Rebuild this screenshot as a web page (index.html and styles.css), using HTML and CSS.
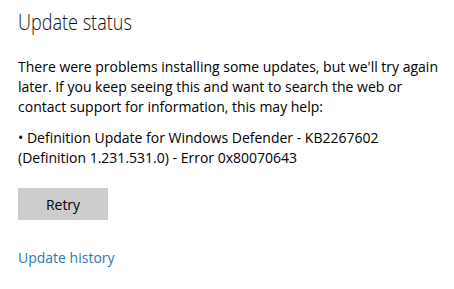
FILE: index.html
```html
<!DOCTYPE html>
<html>
<head>
<meta charset="utf-8">
<link rel="stylesheet" href="styles.css">
</head>
<body>
<div class="page">
  <h1 class="title">Update status</h1>
  <p class="msg">There were problems installing some updates, but we'll try again later. If you keep seeing this and want to search the web or contact support for information, this may help:</p>
  <p class="item">• Definition Update for Windows Defender - KB2267602 (Definition 1.231.531.0) - Error 0x80070643</p>
  <button class="retry">Retry</button>
  <a class="link" href="#">Update history</a>
</div>
</body>
</html>
```
FILE: styles.css
```css
html, body {
  margin: 0;
  padding: 0;
  background: #ffffff;
}
.page {
  padding: 8px 0 0 18px;
  font-family: "Open Sans", "Noto Sans", sans-serif;
  color: #000;
  display: flex;
  flex-direction: column;
  align-items: flex-start;
}
.title {
  margin: 0;
  font-family: "Open Sans", "Noto Sans", sans-serif;
  font-size: 21.5px;
  font-weight: 300;
  line-height: 28px;
  color: #111;
  transform: scaleX(0.84);
  transform-origin: left center;
}
.msg {
  margin: 21px 0 0;
  width: 430px;
  font-size: 14px;
  line-height: 20px;
}
.item {
  margin: 11px 0 0;
  width: 430px;
  font-size: 14px;
  line-height: 20px;
}
.retry {
  margin-top: 20px;
  width: 90px;
  height: 32px;
  border: none;
  background: #cccccc;
  font-family: inherit;
  font-size: 14px;
  color: #000;
  padding: 0;
}
.link {
  margin-top: 28px;
  font-size: 14px;
  line-height: 19px;
  color: #2b7ab4;
  text-decoration: none;
}
```
